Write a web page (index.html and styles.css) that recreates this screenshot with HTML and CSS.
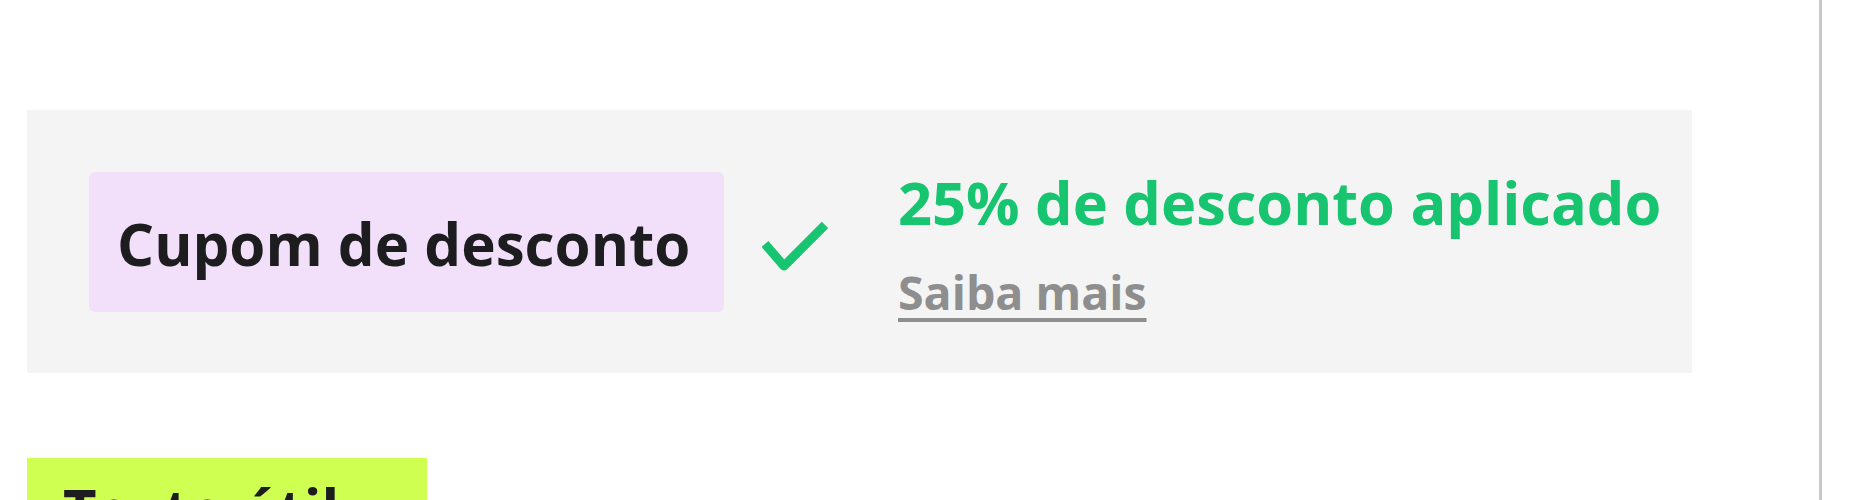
FILE: index.html
```html
<!DOCTYPE html>
<html lang="pt-BR">
<head>
<meta charset="utf-8">
<title>Cupom</title>
<link rel="stylesheet" href="styles.css">
</head>
<body>
<div class="page">
  <main class="content">
    <section class="coupon">
      <div class="coupon-badge">Cupom de desconto</div>
      <svg class="coupon-check" width="66" height="54" viewBox="0 0 66 54" aria-hidden="true">
        <path d="M3 24 L22 46 L63 5" fill="none" stroke="#17c46f" stroke-width="9" stroke-linecap="butt" stroke-linejoin="round"/>
      </svg>
      <div class="coupon-info">
        <div class="coupon-applied">25% de desconto aplicado</div>
        <a class="coupon-link" href="#">Saiba mais</a>
      </div>
    </section>
    <button class="cta" type="button">Texto útil</button>
  </main>
</div>
</body>
</html>
```

FILE: styles.css
```css
html, body {
  margin: 0;
  padding: 0;
  background: #ffffff;
}

body {
  font-family: "Open Sans", "Noto Sans", sans-serif;
  color: #1d1d1f;
}

.page {
  display: flex;
  height: 500px;
  overflow: hidden;
}

.content {
  box-sizing: border-box;
  width: 1822px;
  flex: none;
  padding: 110px 0 0 27px;
  border-right: 3px solid #c9c9cd;
  display: flex;
  flex-direction: column;
  align-items: flex-start;
}

.coupon {
  box-sizing: border-box;
  flex: none;
  width: 1665px;
  height: 263px;
  background: #f4f4f4;
  padding: 0 0 0 62px;
  display: flex;
  align-items: center;
}

.coupon-badge {
  box-sizing: border-box;
  flex: none;
  width: 635px;
  height: 140px;
  background: #f2e0fa;
  border-radius: 6px;
  padding: 4px 0 0 28px;
  display: flex;
  align-items: center;
  font-size: 58.3px;
  font-weight: 700;
  line-height: 64px;
  color: #1d1d1f;
  white-space: nowrap;
}

.coupon-check {
  display: block;
  margin-left: 38px;
  margin-top: 10px;
  flex: none;
}

.coupon-info {
  margin-left: 70px;
  display: flex;
  flex-direction: column;
  align-items: flex-start;
  gap: 32px;
  margin-top: 4px;
}

.coupon-applied {
  font-size: 59.5px;
  font-weight: 700;
  line-height: 64px;
  color: #17c46f;
  white-space: nowrap;
}

.coupon-link {
  font-size: 46.5px;
  font-weight: 700;
  line-height: 52px;
  color: #8e8e8e;
  text-decoration: underline;
  text-decoration-thickness: 4px;
  text-underline-offset: 8px;
  white-space: nowrap;
}

.cta {
  margin-top: 85px;
  width: 400px;
  flex: none;
  border: 0;
  border-radius: 0;
  background: #cfff50;
  color: #1d1d1f;
  font-family: inherit;
  font-size: 58px;
  font-weight: 700;
  line-height: 64px;
  text-align: left;
  padding: 19px 36px 37px 36px;
  display: block;
  box-sizing: border-box;
}
```
